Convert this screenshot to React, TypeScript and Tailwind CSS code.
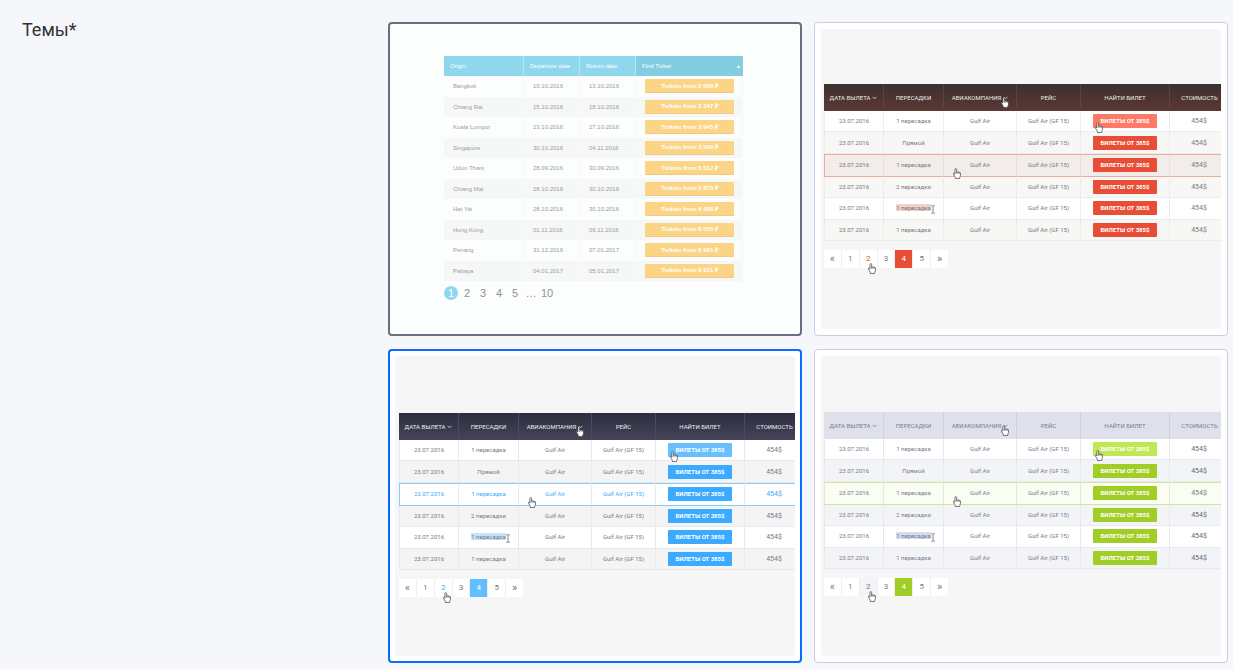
import { useState } from 'react'
import clsx from 'clsx'

const TICKETS = [
  ['Bangkok', '10.10.2016', '13.10.2016', '2 068'],
  ['Chiang Rai', '15.10.2016', '18.10.2016', '2 347'],
  ['Kuala Lumpur', '23.10.2016', '27.10.2016', '3 945'],
  ['Singapore', '30.10.2016', '04.11.2016', '3 999'],
  ['Udon Thani', '28.09.2016', '30.09.2016', '5 512'],
  ['Chiang Mai', '28.10.2016', '30.10.2016', '5 875'],
  ['Hat Yai', '28.10.2016', '30.10.2016', '6 488'],
  ['Hong Kong', '01.11.2016', '09.11.2016', '6 565'],
  ['Penang', '31.12.2016', '07.01.2017', '8 981'],
  ['Pattaya', '04.01.2017', '05.01.2017', '9 931'],
]

const STOPS = ['1 пересадка', 'Прямой', '1 пересадка', '2 пересадки', '1 пересадка', '1 пересадка']

const PAGES = ['«', '1', '2', '3', '4', '5', '»']

const HOVER_ROW = 2
const SELECTED_ROW = 4

type Theme = {
  inset: string
  head: string
  headCell: string
  text: string
  price: string
  even: string
  line: string
  hoverRow: string
  hoverCell: string
  button: string
  buttonHover: string
  selection: string
  page: string
  pageHover: string
  pageActive: string
}

const RED: Theme = {
  inset: 'pt-[55px] pl-[3px]',
  head: 'bg-linear-to-b from-[#3a302f] to-[#5c3834] text-[#efe9e8]',
  headCell: 'border-[#5a4441]',
  text: 'text-[#77777a]',
  price: 'text-[#77777a]',
  even: 'bg-[#f7f7f5]',
  line: 'border-[#ececea]',
  hoverRow: 'bg-[#f2eceb]',
  hoverCell: 'border-y-[#efaaa0] border-r-[#e6e0df] border-l-[#efaaa0]',
  button: 'bg-[#e84e36]',
  buttonHover: 'bg-[#ff7a66]',
  selection: 'bg-[#f3cfcb]',
  page: 'text-[#77777a]',
  pageHover: 'bg-white text-[#e84e36]',
  pageActive: 'bg-[#e84e36] text-white',
}

const BLUE: Theme = {
  inset: 'pt-[57px] pl-1',
  head: 'bg-linear-to-b from-[#2c2d3e] to-[#454459] text-[#ececf2]',
  headCell: 'border-[#4b4b5f]',
  text: 'text-[#777889]',
  price: 'text-[#777889]',
  even: 'bg-[#f4f4f4]',
  line: 'border-[#e9e9ed]',
  hoverRow: 'bg-white text-[#3fa9f5]',
  hoverCell: 'border-y-[#86cdfb] border-r-[#e9e9ed] border-l-[#86cdfb]',
  button: 'bg-[#3caaff]',
  buttonHover: 'bg-[#66bfff]',
  selection: 'bg-[#c3e3fa]',
  page: 'text-[#777889]',
  pageHover: 'bg-white text-[#3fa9f5]',
  pageActive: 'bg-[#62bfff] text-white',
}

const GREEN: Theme = {
  inset: 'pt-[56px] pl-[3px]',
  head: 'bg-[#dee0ec] text-[#7b7d92]',
  headCell: 'border-[#cfd1df]',
  text: 'text-[#777a8c]',
  price: 'text-[#62657a]',
  even: 'bg-[#f3f4f8]',
  line: 'border-[#e8e9ef]',
  hoverRow: 'bg-[#fafdf2]',
  hoverCell: 'border-y-[#d3e59c] border-r-[#e6ebd8] border-l-[#e6ebd8]',
  button: 'bg-[#a0ce27]',
  buttonHover: 'bg-[#bfe854]',
  selection: 'bg-[#d5dbf0]',
  page: 'text-[#777a8c]',
  pageHover: 'bg-[#f3f4f8] text-[#777a8c]',
  pageActive: 'bg-[#a0ce27] text-white',
}

function Chevron() {
  return (
    <svg className="ml-0.5 inline-block h-1 w-[5px]" viewBox="0 0 8 6" fill="none" stroke="currentColor" strokeWidth="1.3" aria-hidden="true">
      <path d="M1 1.2l3 3 3-3" />
    </svg>
  )
}

function Hand({ className }: { className: string }) {
  return (
    <svg className={clsx('absolute h-[11px] w-2', className)} viewBox="0 0 16 22" aria-hidden="true">
      <path
        d="M5.6 1.2c-1 0-1.7.7-1.7 1.7v9.2l-1-1.3c-.6-.8-1.4-.9-2-.3-.4.5-.3 1.1 0 1.7l3 5.2c.5.9.8 1.3.8 2.2v1.3h8.6v-1.5c0-1.2 1.6-2.4 1.6-4.8V10c0-1.6-2.3-1.9-2.5-.5 0-1.8-2.5-2-2.6-.6-.1-1.6-2.4-1.7-2.5-.3V2.9c0-1-.7-1.7-1.7-1.7z"
        fill="#fff"
        stroke="#444"
        strokeWidth="1.5"
        strokeLinejoin="round"
      />
      <path d="M7.3 8.5v3.2M9.8 9v2.7M12.4 9.6v2.4" stroke="#444" strokeWidth="1" />
    </svg>
  )
}

function TextCursor() {
  return (
    <svg className="absolute top-[121px] left-[107px] h-[9px] w-1" viewBox="0 0 8 18" fill="none" stroke="#555" strokeWidth="1.5" aria-hidden="true">
      <path d="M.5 1.5H3L4 2.5l1-1h2.5M4 2.5v13M.5 16.5H3l1-1 1 1h2.5" />
    </svg>
  )
}

function FlightsPreview({ theme }: { theme: Theme }) {
  const headCell = clsx('border-r p-0 font-normal last:border-r-0', theme.headCell)

  return (
    <div className={clsx('h-[300px] overflow-hidden rounded bg-[#f6f6f6] font-[Roboto,sans-serif] text-[6px] leading-2', theme.inset)}>
      <div className="relative">
        <table className={clsx('h-[157px] w-[405px] table-fixed border-separate border-spacing-0 text-center', theme.text)}>
          <colgroup>
            <col className="w-[60px]" />
            <col className="w-[60px]" />
            <col className="w-[73px]" />
            <col className="w-[64px]" />
            <col className="w-[89px]" />
            <col className="w-[59px]" />
          </colgroup>
          <thead>
            <tr className={clsx('h-[27px] whitespace-nowrap', theme.head)}>
              <th className={headCell}>ДАТА ВЫЛЕТА<Chevron /></th>
              <th className={headCell}>ПЕРЕСАДКИ</th>
              <th className={headCell}>АВИАКОМПАНИЯ<Chevron /></th>
              <th className={headCell}>РЕЙС</th>
              <th className={headCell}>НАЙТИ БИЛЕТ</th>
              <th className={headCell}>СТОИМОСТЬ</th>
            </tr>
          </thead>
          <tbody>
            {STOPS.map((stops, i) => {
              const cell = clsx(
                'border-r border-b p-0 first:border-l',
                i === HOVER_ROW ? 'border-t' : theme.line,
                i === HOVER_ROW && theme.hoverCell
              )
              return (
                <tr key={i} className={i === HOVER_ROW ? theme.hoverRow : i % 2 ? theme.even : 'bg-white'}>
                  <td className={cell}>23.07.2016</td>
                  <td className={cell}>
                    <span className={clsx(i === SELECTED_ROW && theme.selection)}>{stops}</span>
                  </td>
                  <td className={cell}>Gulf Air</td>
                  <td className={cell}>Gulf Air (GF 15)</td>
                  <td className={cell}>
                    <button
                      type="button"
                      className={clsx(
                        'block mx-auto h-[14px] w-16 rounded-[1px] font-bold text-white',
                        i === 0 ? theme.buttonHover : theme.button
                      )}
                    >
                      БИЛЕТЫ ОТ 385$
                    </button>
                  </td>
                  <td className={clsx(cell, 'text-[7px]', i !== HOVER_ROW && theme.price)}>454$</td>
                </tr>
              )
            })}
          </tbody>
        </table>
        <div className="mt-[9px] flex h-[18px] w-[124px] gap-px bg-[#efeff0] text-[8px]">
          {PAGES.map((page) => (
            <button
              key={page}
              type="button"
              className={clsx(
                'flex-1',
                (page === '«' || page === '»') && 'text-[11px]',
                page === '4' ? theme.pageActive : page === '2' ? theme.pageHover : 'bg-white',
                page !== '4' && page !== '2' && theme.page
              )}
            >
              {page}
            </button>
          ))}
        </div>
        <Hand className="top-[13px] left-[177px]" />
        <Hand className="top-[38px] left-[271px]" />
        <Hand className="top-[84px] left-[129px]" />
        <Hand className="top-[179px] left-[44px]" />
        <TextCursor />
      </div>
    </div>
  )
}

function TicketsPreview() {
  const headCell = 'border-r border-[#b5e6f4] p-0 pl-1.5 font-normal last:border-r-0'
  const cell = 'border-r border-[#f7f8f8] p-0 pl-[9px]'

  return (
    <div className="h-[300px] pt-[27px] pl-[49px] font-['Liberation_Sans',sans-serif] text-[6px] leading-2">
      <table className="h-[225px] w-[299px] table-fixed border-separate border-spacing-0 text-left text-[#9b9c9e]">
        <colgroup>
          <col className="w-20" />
          <col className="w-14" />
          <col className="w-14" />
          <col className="w-[107px]" />
        </colgroup>
        <thead>
          <tr className="h-5 bg-[#8fd7ed] text-white">
            <th className={headCell}>Origin</th>
            <th className={headCell}>Departure date</th>
            <th className={headCell}>Return date</th>
            <th className={clsx(headCell, 'bg-[#84cde0]')}>
              <span className="flex items-center justify-between pr-[3px]">
                Find Ticket
                <svg className="h-[3px] w-[3px]" viewBox="0 0 6 6" fill="#fff" aria-hidden="true">
                  <path d="M3 0l3 6H0z" />
                </svg>
              </span>
            </th>
          </tr>
        </thead>
        <tbody>
          {TICKETS.map(([city, departure, back, price]) => (
            <tr key={city} className="even:bg-[#f6f7f7]">
              <td className={cell}>{city}</td>
              <td className={cell}>{departure}</td>
              <td className={cell}>{back}</td>
              <td className={cell}>
                <button type="button" className="block h-[14px] w-[89px] rounded-[1px] border-b border-[#f0c987] bg-[#fbd585] font-bold text-white">
                  Tickets from {price} ₽
                </button>
              </td>
            </tr>
          ))}
        </tbody>
      </table>
      <div className="mt-[5px] flex gap-0.5 text-[11px] leading-[14px] text-[#8f9092]">
        {['1', '2', '3', '4', '5', '…', '10'].map((page) => (
          <button
            key={page}
            type="button"
            className={clsx('h-[14px] w-[14px]', page === '1' && 'rounded-full bg-[#8fd7ed] text-white')}
          >
            {page}
          </button>
        ))}
      </div>
    </div>
  )
}

const THEMES = [
  { id: 'default', border: 'border-2 border-[#6c6d80] p-[5px] bg-[#fcfefd]', preview: <TicketsPreview /> },
  { id: 'red', border: 'border border-[#cccddd] p-1.5 bg-white', preview: <FlightsPreview theme={RED} /> },
  { id: 'blue', border: 'border-2 border-[#0a6cff] p-[5px] bg-white', preview: <FlightsPreview theme={BLUE} /> },
  { id: 'green', border: 'border border-[#cccddd] p-1.5 bg-white', preview: <FlightsPreview theme={GREEN} /> },
]

export default function App() {
  const [selected, setSelected] = useState('blue')

  return (
    <main className="flex min-h-screen bg-[#f5f7fb] pt-[22px] pr-[5px] pb-1.5 pl-[22px]">
      <h2 id="themes-label" className="w-[366px] shrink-0 font-[Roboto,sans-serif] text-lg leading-4 text-[#333]">
        Темы*
      </h2>
      <div role="radiogroup" aria-labelledby="themes-label" className="grid min-w-0 flex-1 grid-cols-2 content-start gap-x-3 gap-y-[13px]">
        {THEMES.map(({ id, border, preview }) => (
          <div key={id} className={clsx('relative min-w-0 rounded', border)}>
            {preview}
            <input
              type="radio"
              name="theme"
              aria-label={id}
              value={id}
              checked={selected === id}
              onChange={() => setSelected(id)}
              className="absolute inset-0 h-full w-full cursor-pointer appearance-none rounded"
            />
          </div>
        ))}
      </div>
    </main>
  )
}
